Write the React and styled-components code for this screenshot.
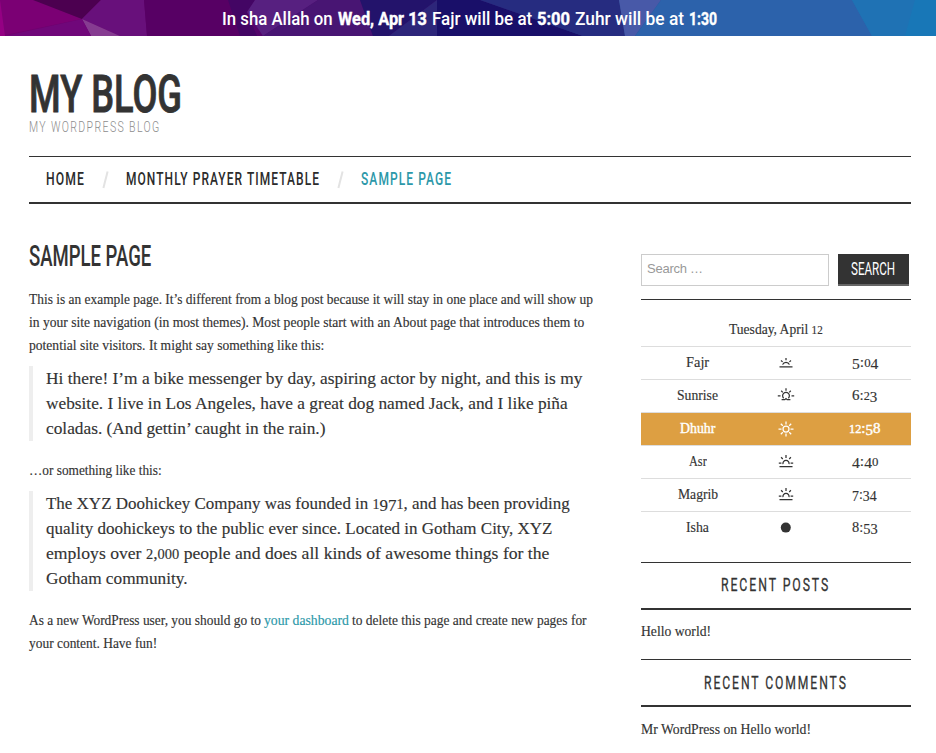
import React, { useLayoutEffect, useRef, useState } from "react";
import styled, { createGlobalStyle, css } from "styled-components";

const GlobalStyle = createGlobalStyle`
  * { box-sizing: border-box; }
  body { margin: 0; background: #fff; color: #333; overflow: hidden; }
  h1, h2, h3, p, blockquote, ul { margin: 0; padding: 0; font-weight: inherit; }
  a { color: inherit; text-decoration: none; }
`;

const FitBox = styled.span`
  display: inline-block;
  width: ${(p) => p.$w}px;
  white-space: pre;
  vertical-align: top;
  text-align: left;
`;
const FitInner = styled.span`
  display: inline-block;
  transform-origin: 0 50%;
  vertical-align: top;
`;

/* Condenses or widens a single line of text to a set width. */
function Fit({ w, children }) {
  const ref = useRef(null);
  const [scale, setScale] = useState(1);
  useLayoutEffect(() => {
    const measure = () => {
      const el = ref.current;
      const spacing = parseFloat(getComputedStyle(el).letterSpacing) || 0;
      setScale(w / (el.offsetWidth - spacing));
    };
    measure();
    document.fonts.ready.then(measure);
  }, [w]);
  return (
    <FitBox $w={w}>
      <FitInner ref={ref} style={{ transform: `scaleX(${scale})` }}>{children}</FitInner>
    </FitBox>
  );
}

const display = css`font-family: Roboto, "Open Sans", sans-serif;`;
const serif = css`
  font-family: "Liberation Serif", Georgia, serif;
  -webkit-text-stroke: 0.15px currentColor;
`;

const SmallDigit = styled.span`font-size: 0.82em; line-height: 1;`;
const LowDigit = styled.span`
  vertical-align: -0.14em;
  line-height: 1;
`;
/* Text figures: 0-2 at x-height, 3 4 5 7 9 descending. */
const figures = (text) =>
  text.split("").map((c, i) => {
    if ("012".includes(c)) return <SmallDigit key={i}>{c}</SmallDigit>;
    if ("34579".includes(c)) return <LowDigit key={i}>{c}</LowDigit>;
    return c;
  });

const Banner = styled.div`
  position: relative;
  height: 36px;
  overflow: hidden;
  background: linear-gradient(90deg, #75006f 0, #5b0069 20%, #3b116f 50%, #24357f 60%, #2b62aa 75%, #1878b8 100%);
`;
const Facets = styled.svg`
  position: absolute;
  inset: 0;
  width: 936px;
  height: 36px;
`;
const BannerText = styled.div`
  position: relative;
  display: flex;
  gap: 5px;
  padding-left: 222px;
  color: #fff;
  ${display}
  font-weight: 500;
  font-size: 18px;
  line-height: 38px;
`;
const Strong = styled.strong`font-weight: 700; -webkit-text-stroke: 0.4px #fff;`;

const Page = styled.div`
  width: 882px;
  margin: 0 0 0 29px;
`;
const Header = styled.header`
  height: 120px;
  padding-top: 34px;
`;
const SiteTitle = styled.h1`
  ${display}
  font-size: 52px;
  font-weight: 500;
  line-height: 50px;
  height: 50px;
  -webkit-text-stroke: 0.9px currentColor;
`;
const Tagline = styled.div`
  ${display}
  font-size: 15.5px;
  font-weight: 300;
  line-height: 14px;
  letter-spacing: 2px;
  color: #8c8c8c;
`;
const Nav = styled.nav`
  display: flex;
  height: 48px;
  border-top: 1px solid #333;
  border-bottom: 2px solid #333;
  padding-left: 17px;
  ${display}
  font-size: 19px;
  font-weight: 500;
  letter-spacing: 1.7px;
  line-height: 44px;
`;
const NavLink = styled.a`
  color: ${(p) => (p.$active ? "#2c98a9" : "#2b2b2b")};
`;
const Slash = styled.svg`
  width: 7px;
  height: 18px;
  margin: 14px 17px 0 18px;
`;
const Columns = styled.div`display: flex; justify-content: space-between;`;
const Main = styled.main`width: 570px;`;
const Side = styled.aside`width: 270px; padding-top: 50px;`;
const PageTitle = styled.h2`
  ${display}
  font-size: 29px;
  font-weight: 500;
  line-height: 32px;
  margin: 36px 0 15px;
  height: 32px;
`;
const Para = styled.p`
  ${serif}
  font-size: 15px;
  line-height: 23px;
  margin-bottom: 10px;
`;
const Line = styled.span`
  display: block;
  height: ${(p) => p.$h || 23}px;
`;
const ParaLine = styled(Line)`line-height: 24px;`;
const Quote = styled.blockquote`
  ${serif}
  border-left: 4px solid #eee;
  padding-left: 13px;
  margin-bottom: 17px;
  font-size: 17px;
  line-height: 25px;
`;
const TealLink = styled.a`color: #2c98a9;`;

const SearchForm = styled.form`
  display: flex;
  gap: 9px;
  height: 45px;
`;
const SearchInput = styled.input`
  width: 188px;
  height: 32px;
  border: 1px solid #ccc;
  padding: 0 5px 3px;
  outline: 0;
  font: 13px "Liberation Sans", Arial, sans-serif;
  letter-spacing: -0.25px;
  &::placeholder { color: #999; opacity: 1; }
`;
const SearchButton = styled.button`
  width: 71px;
  height: 32px;
  padding: 0 0 0 13px;
  border: 0;
  border-bottom: 2px solid #666;
  background: #333;
  color: #fff;
  text-align: left;
  ${display}
  font-size: 18.5px;
  line-height: 30px;
`;
const Times = styled.div`
  ${serif}
  border-top: 1px solid #333;
  height: 263px;
  padding-top: 13px;
  font-size: 15px;
  text-align: center;
`;
const DateRow = styled.div`height: 33px; line-height: 33px;`;
const TimeRow = styled.div`
  display: grid;
  grid-template-columns: 113px 64px 93px;
  height: 33px;
  border-top: 1px solid #ddd;
  line-height: 30px;
  ${(p) => p.$active && css`
    background: #dd9f42;
    color: #fff;
    -webkit-text-stroke: 0.4px #fff;
  `}
`;
const IconCell = styled.span`
  display: flex;
  justify-content: center;
  align-items: center;
  height: 32px;
`;
const Glyph = styled.svg`
  width: 18px;
  height: 18px;
  fill: none;
  stroke: currentColor;
  stroke-width: 1.25;
`;
const Widget = styled.section`
  height: ${(p) => p.$h}px;
  ${serif}
  font-size: 15px;
`;
const WidgetTitle = styled.h3`
  height: 48px;
  border-top: 1px solid #333;
  border-bottom: 2px solid #333;
  padding-right: 3px;
  text-align: center;
  ${display}
  font-size: 19px;
  line-height: ${(p) => p.$lh}px;
  letter-spacing: 3px;
  -webkit-text-stroke: 0.3px currentColor;
`;
const WidgetItem = styled.div`
  padding-top: 10px;
  line-height: ${(p) => p.$lh}px;
`;

const ICONS = {
  fajr: <path d="M2.5 12.8h13M5.6 10.6a3.6 3.4 0 0 1 6.8 0M9 4v2.3M4 6.5l1.6 1.4M14 6.5l-1.6 1.4" />,
  sunrise: <path d="M4.6 12.6h3.2L9 11.5l1.2 1.1h3.2M6.6 11.2a3.4 3.4 0 1 1 4.8 0M9 1.2v2.6M4.2 3.8l1.6 1.6M13.8 3.8l-1.6 1.6M.8 8.8h2.7M14.5 8.8h2.7" />,
  noon: <path d="M12 9a3 3 0 1 1-6 0a3 3 0 1 1 6 0M9 1.5v3M9 13.5v3M1.5 9h3M13.5 9h3M3.8 3.8l2 2M14.2 3.8l-2 2M3.8 14.2l2-2M14.2 14.2l-2-2" />,
  set: <path d="M2.5 13.5h13M6 11.2a3.1 3.1 0 1 1 6 0M9 2v3M4.1 4.3l1.7 1.7M13.9 4.3l-1.7 1.7M1.8 10.2h2.6M13.6 10.2h2.6" />,
  night: <circle cx="8.8" cy="8.6" r="5" fill="currentColor" stroke="none" />,
};

const ROWS = [
  ["Fajr", 23, "fajr", "5:04", 26],
  ["Sunrise", 41, "sunrise", "6:23", 25],
  ["Dhuhr", 35, "noon", "12:58", 31],
  ["Asr", 18, "set", "4:40", 26],
  ["Magrib", 40, "set", "7:34", 25],
  ["Isha", 23, "night", "8:53", 26],
];

const Separator = () => (
  <Slash viewBox="0 0 7 18"><path d="M5.6 .5 1.4 17" fill="none" stroke="#e3e3e3" strokeWidth="2" /></Slash>
);

export default function App() {
  return (
    <>
      <GlobalStyle />
      <Banner>
        <Facets viewBox="0 0 936 36">
          <path d="M0 0h36l46 19L0 36z" fill="#7b0074" />
          <path d="M0 0 5 36H0z" fill="#940083" />
          <path d="M33 0h68L82 19z" fill="#4c0050" />
          <path d="M101 0h43l3 36h-27L82 19z" fill="#68107b" />
          <path d="M82 19 120 36H91z" fill="#863c91" />
          <path d="M82 19 5 36h86z" fill="#70077a" />
          <path d="M144 0h84l20 36H147z" fill="#570064" />
          <path d="M228 0h27l-8 13 10 23h-17z" fill="#430564" />
          <path d="M255 0h63l-55 36-16-24z" fill="#572080" />
          <path d="M318 0h42l13 36H263z" fill="#481573" />
          <path d="M360 0h77l-48 36h-16z" fill="#23136b" />
          <path d="M437 0v36h-48z" fill="#2d267a" />
          <path d="M437 0h43l103 36H437z" fill="#190f69" />
          <path d="M480 0h139l6 36h-42z" fill="#262c80" />
          <path d="M619 0h42l-26 36h-10z" fill="#4859a8" />
          <path d="M661 0h191l20 36H635z" fill="#2c62ab" />
          <path d="M852 0h84v36h-64z" fill="#1f72b4" />
          <path d="M915 0h21v36h-31z" fill="#147bb9" opacity=".6" />
        </Facets>
        <BannerText>
          <Fit w={111}>In sha Allah on</Fit>
          <Strong><Fit w={89}>Wed, Apr 13</Fit></Strong>
          <Fit w={100}>Fajr will be at</Fit>
          <Strong><Fit w={33}>5:00</Fit></Strong>
          <Fit w={109}>Zuhr will be at</Fit>
          <Strong><Fit w={28}>1:30</Fit></Strong>
        </BannerText>
      </Banner>
      <Page>
        <Header>
          <SiteTitle><Fit w={153}>MY BLOG</Fit></SiteTitle>
          <Tagline><Fit w={130}>MY WORDPRESS BLOG</Fit></Tagline>
        </Header>
        <Nav>
          <NavLink href="#"><Fit w={38}>HOME</Fit></NavLink>
          <Separator />
          <NavLink href="#"><Fit w={193}>MONTHLY PRAYER TIMETABLE</Fit></NavLink>
          <Separator />
          <NavLink href="#" $active><Fit w={90}>SAMPLE PAGE</Fit></NavLink>
        </Nav>
        <Columns>
          <Main>
            <PageTitle><Fit w={122}>SAMPLE PAGE</Fit></PageTitle>
            <Para>
              <ParaLine><Fit w={563.5}>This is an example page. It’s different from a blog post because it will stay in one place and will show up</Fit></ParaLine>
              <ParaLine><Fit w={555}>in your site navigation (in most themes). Most people start with an About page that introduces them to</Fit></ParaLine>
              <ParaLine><Fit w={295}>potential site visitors. It might say something like this:</Fit></ParaLine>
            </Para>
            <Quote>
              <Line $h={25}><Fit w={536}>Hi there! I’m a bike messenger by day, aspiring actor by night, and this is my</Fit></Line>
              <Line $h={25}><Fit w={522}>website. I live in Los Angeles, have a great dog named Jack, and I like piña</Fit></Line>
              <Line $h={25}><Fit w={279}>coladas. (And gettin’ caught in the rain.)</Fit></Line>
            </Quote>
            <Para><ParaLine><Fit w={133}>…or something like this:</Fit></ParaLine></Para>
            <Quote>
              <Line $h={25}><Fit w={524}>The XYZ Doohickey Company was founded in {figures("1971")}, and has been providing</Fit></Line>
              <Line $h={25}><Fit w={506}>quality doohickeys to the public ever since. Located in Gotham City, XYZ</Fit></Line>
              <Line $h={25}><Fit w={503}>employs over {figures("2,000")} people and does all kinds of awesome things for the</Fit></Line>
              <Line $h={25}><Fit w={142}>Gotham community.</Fit></Line>
            </Quote>
            <Para>
              <ParaLine><Fit w={232}>As a new WordPress user, you should go to</Fit><Fit w={3}> </Fit><TealLink href="#"><Fit w={85}>your dashboard</Fit></TealLink><Fit w={3}> </Fit><Fit w={235}>to delete this page and create new pages for</Fit></ParaLine>
              <ParaLine><Fit w={128}>your content. Have fun!</Fit></ParaLine>
            </Para>
          </Main>
          <Side>
            <SearchForm onSubmit={(e) => e.preventDefault()}>
              <SearchInput placeholder="Search …" />
              <SearchButton><Fit w={44}>SEARCH</Fit></SearchButton>
            </SearchForm>
            <Times>
              <DateRow><Fit w={94}>Tuesday, April {figures("12")}</Fit></DateRow>
              {ROWS.map(([name, nameWidth, icon, time, timeWidth]) => (
                <TimeRow key={name} $active={name === "Dhuhr"}>
                  <span><Fit w={nameWidth}>{name}</Fit></span>
                  <IconCell><Glyph viewBox="0 0 18 18">{ICONS[icon]}</Glyph></IconCell>
                  <span><Fit w={timeWidth}>{figures(time)}</Fit></span>
                </TimeRow>
              ))}
            </Times>
            <Widget $h={97}>
              <WidgetTitle $lh={44}><Fit w={107}>RECENT POSTS</Fit></WidgetTitle>
              <WidgetItem $lh={23}><Fit w={70}>Hello world!</Fit></WidgetItem>
            </Widget>
            <Widget $h={94}>
              <WidgetTitle $lh={46}><Fit w={142}>RECENT COMMENTS</Fit></WidgetTitle>
              <WidgetItem $lh={25}><Fit w={170}>Mr WordPress on Hello world!</Fit></WidgetItem>
            </Widget>
          </Side>
        </Columns>
      </Page>
    </>
  );
}
